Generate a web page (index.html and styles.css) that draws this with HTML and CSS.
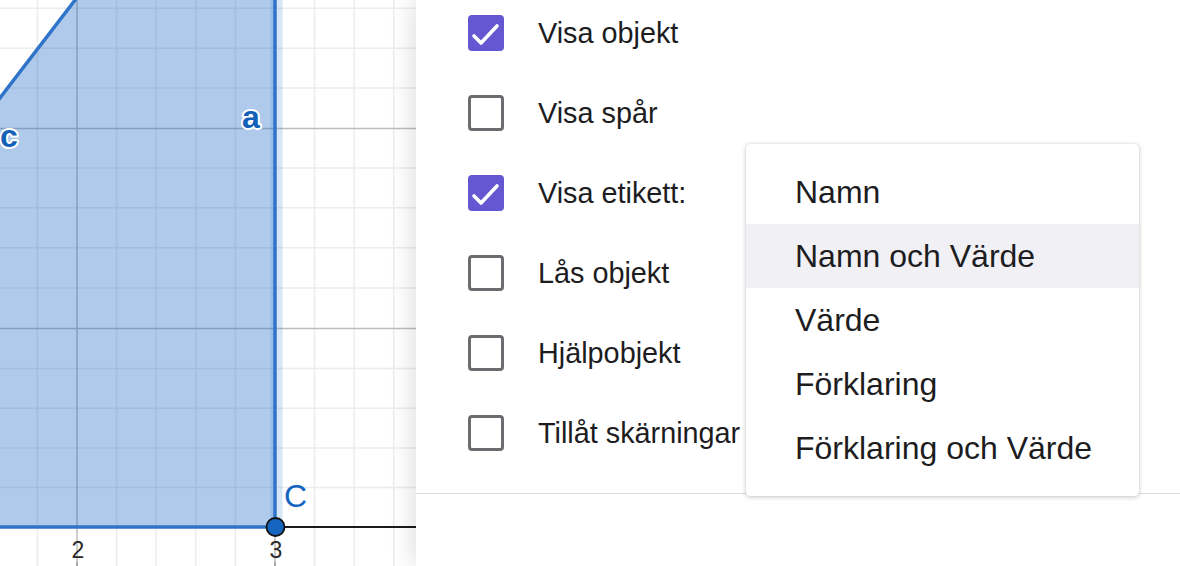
FILE: index.html
```html
<!DOCTYPE html>
<html lang="sv">
<head>
<meta charset="utf-8">
<title>Egenskaper</title>
<link rel="stylesheet" href="styles.css">
</head>
<body>
<div class="app">
  <div class="graph">
    <svg class="canvas" width="416" height="566" viewBox="0 0 416 566">
      <g class="minor">
        <line x1="37.4" y1="0" x2="37.4" y2="566"/>
        <line x1="116.6" y1="0" x2="116.6" y2="566"/>
        <line x1="156.2" y1="0" x2="156.2" y2="566"/>
        <line x1="195.8" y1="0" x2="195.8" y2="566"/>
        <line x1="235.4" y1="0" x2="235.4" y2="566"/>
        <line x1="314.6" y1="0" x2="314.6" y2="566"/>
        <line x1="354.2" y1="0" x2="354.2" y2="566"/>
        <line x1="393.8" y1="0" x2="393.8" y2="566"/>
        <line x1="0" y1="8.3" x2="416" y2="8.3"/>
        <line x1="0" y1="48.2" x2="416" y2="48.2"/>
        <line x1="0" y1="88.1" x2="416" y2="88.1"/>
        <line x1="0" y1="167.9" x2="416" y2="167.9"/>
        <line x1="0" y1="207.8" x2="416" y2="207.8"/>
        <line x1="0" y1="247.7" x2="416" y2="247.7"/>
        <line x1="0" y1="288" x2="416" y2="288"/>
        <line x1="0" y1="368.5" x2="416" y2="368.5"/>
        <line x1="0" y1="408.3" x2="416" y2="408.3"/>
        <line x1="0" y1="448" x2="416" y2="448"/>
        <line x1="0" y1="487.5" x2="416" y2="487.5"/>
      </g>
      <g class="major">
        <line x1="77" y1="0" x2="77" y2="566"/>
        <line x1="275" y1="0" x2="275" y2="566"/>
        <line x1="0" y1="128.5" x2="416" y2="128.5"/>
        <line x1="0" y1="328.5" x2="416" y2="328.5"/>
      </g>
      <line class="axis" x1="0" y1="527" x2="416" y2="527"/>
      <line class="tick" x1="77" y1="562" x2="77" y2="566"/>
      <line class="tick" x1="275" y1="562" x2="275" y2="566"/>
      <polygon class="poly" points="-20,124 115,-52 275,-52 275,527 -20,527"/>
      <line class="glow" x1="276.5" y1="-10" x2="276.5" y2="527"/>
      <line class="edge" x1="-20" y1="124" x2="115" y2="-52"/>
      <line class="edge" x1="275" y1="-10" x2="275" y2="527"/>
      <line class="edge" x1="-10" y1="527" x2="275" y2="527"/>
      <text class="seg-label" x="0" y="147">c</text>
      <text class="seg-label" x="242" y="128">a</text>
      <text class="pt-label" x="284" y="507">C</text>
      <circle class="point" cx="275.5" cy="527" r="9"/>
      <text class="num" x="78" y="558">2</text>
      <text class="num" x="276" y="558">3</text>
    </svg>
  </div>
  <div class="panel">
    <div class="options">
      <div class="row">
        <span class="cb cb-on"><svg viewBox="0 0 36 36" width="36" height="36"><polyline points="6,21 13,28 29,11"/></svg></span>
        <span class="label">Visa objekt</span>
      </div>
      <div class="row">
        <span class="cb"></span>
        <span class="label">Visa spår</span>
      </div>
      <div class="row">
        <span class="cb cb-on"><svg viewBox="0 0 36 36" width="36" height="36"><polyline points="6,21 13,28 29,11"/></svg></span>
        <span class="label">Visa etikett:</span>
      </div>
      <div class="row">
        <span class="cb"></span>
        <span class="label">Lås objekt</span>
      </div>
      <div class="row">
        <span class="cb"></span>
        <span class="label">Hjälpobjekt</span>
      </div>
      <div class="row">
        <span class="cb"></span>
        <span class="label">Tillåt skärningar</span>
      </div>
    </div>
    <ul class="menu">
      <li class="item">Namn</li>
      <li class="item item-hover">Namn och Värde</li>
      <li class="item">Värde</li>
      <li class="item">Förklaring</li>
      <li class="item">Förklaring och Värde</li>
    </ul>
  </div>
</div>
</body>
</html>
```
FILE: styles.css
```css
html, body {
  margin: 0;
  padding: 0;
  background: #ffffff;
}

body {
  font-family: "Liberation Sans", Arial, Helvetica, sans-serif;
  color: #1d1d1f;
  overflow: hidden;
}

.app {
  display: flex;
  width: 1180px;
  height: 566px;
  overflow: hidden;
}

.graph {
  flex: 0 0 416px;
  height: 566px;
  overflow: hidden;
}

.canvas {
  display: block;
}

.minor line {
  stroke: #ececec;
  stroke-width: 1.5;
}

.major line {
  stroke: #bdbdbd;
  stroke-width: 1.5;
}

.axis {
  stroke: #1b1b1b;
  stroke-width: 2;
}

.tick {
  stroke: #9a9a9a;
  stroke-width: 1.5;
}

.poly {
  fill: rgba(21, 101, 192, 0.34);
  stroke: none;
}

.glow {
  stroke: rgba(70, 140, 215, 0.22);
  stroke-width: 12;
}

.edge {
  stroke: #2f74c8;
  stroke-width: 3.5;
}

.seg-label {
  font-family: "Liberation Sans", Arial, sans-serif;
  font-size: 32px;
  font-weight: bold;
  fill: #1261b8;
  stroke: #ffffff;
  stroke-width: 4;
  paint-order: stroke;
  stroke-linejoin: round;
}

.pt-label {
  font-family: "Liberation Sans", Arial, sans-serif;
  font-size: 32px;
  fill: #1565c0;
}

.point {
  fill: #1565c0;
  stroke: #111111;
  stroke-width: 1.8;
}

.num {
  font-family: "Liberation Sans", Arial, sans-serif;
  font-size: 23px;
  fill: #2a2a2a;
  text-anchor: middle;
}

.panel {
  flex: 1 1 auto;
  position: relative;
  background: #ffffff;
  box-shadow: 0 0 26px rgba(0, 0, 0, 0.16);
  z-index: 1;
}

.options {
  margin-top: -7px;
  padding: 0 0 20px 52px;
  border-bottom: 1.5px solid #dcdcdc;
}

.row {
  display: flex;
  align-items: center;
  height: 80px;
  gap: 34px;
}

.cb {
  box-sizing: border-box;
  width: 36px;
  height: 36px;
  border: 3px solid #6b6b70;
  border-radius: 4px;
  flex: 0 0 36px;
  display: flex;
  align-items: center;
  justify-content: center;
}

.cb-on {
  background: #6557d2;
  border: none;
}

.cb-on polyline {
  fill: none;
  stroke: #ffffff;
  stroke-width: 3.6;
  stroke-linecap: round;
  stroke-linejoin: round;
}

.label {
  font-size: 28.8px;
  color: #1d1d1f;
  white-space: nowrap;
}

.menu {
  position: absolute;
  left: 330px;
  top: 144px;
  width: 393px;
  margin: 0;
  padding: 16px 0;
  list-style: none;
  background: #ffffff;
  border-radius: 4px;
  box-shadow: 0 1px 5px rgba(0, 0, 0, 0.22), 0 0 1px rgba(0, 0, 0, 0.2);
}

.item {
  height: 64px;
  display: flex;
  align-items: center;
  padding-left: 49px;
  font-size: 32px;
  color: #1d1d1f;
  white-space: nowrap;
}

.item-hover {
  background: #f1f0f5;
}
```
